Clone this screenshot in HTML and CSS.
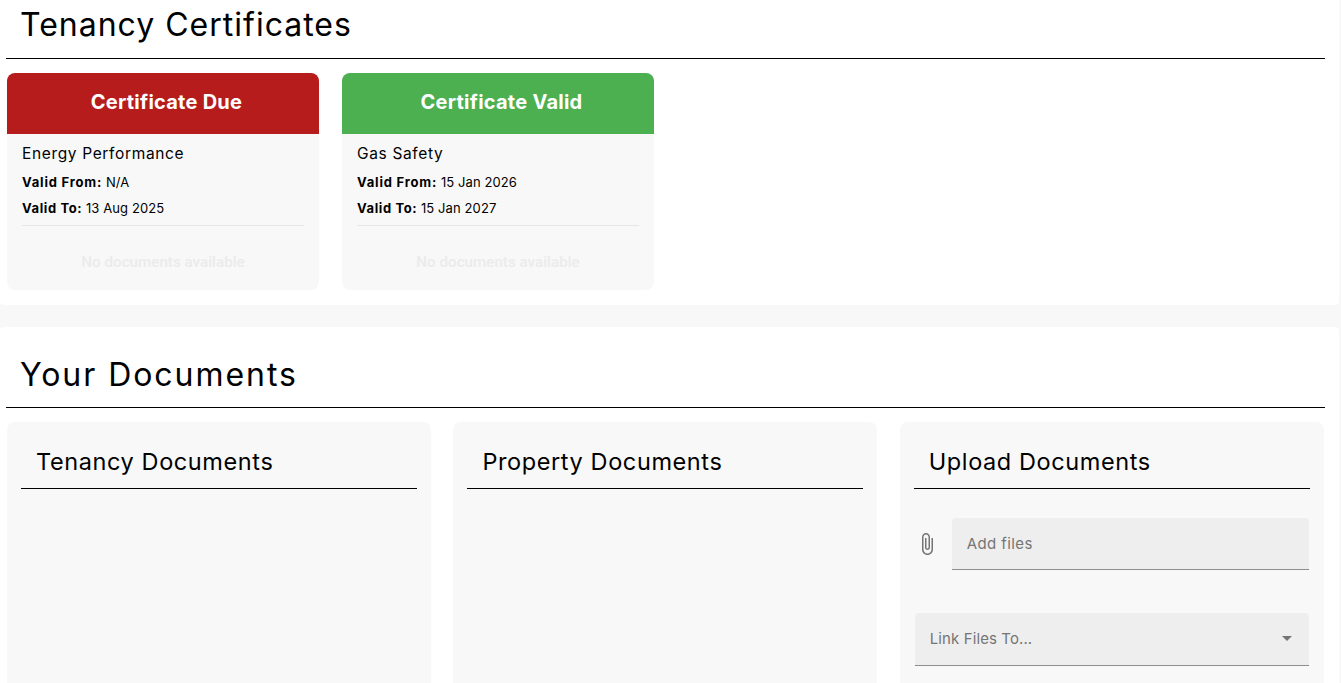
FILE: index.html
```html
<!DOCTYPE html>
<html lang="en">
<head>
<meta charset="utf-8">
<title>Documents</title>
<link rel="stylesheet" href="styles.css">
</head>
<body>
<div class="page">
  <section class="section first">
    <h1 class="section-title">Tenancy Certificates</h1>
    <div class="cert-row">
      <article class="cert">
        <div class="cert-head due">Certificate Due</div>
        <div class="cert-body">
          <div class="cert-name">Energy Performance</div>
          <div class="cert-line"><b>Valid From:</b> N/A</div>
          <div class="cert-line"><b class="to">Valid To:</b> 13 Aug 2025</div>
          <div class="cert-empty">No documents available</div>
        </div>
      </article>
      <article class="cert">
        <div class="cert-head valid">Certificate Valid</div>
        <div class="cert-body">
          <div class="cert-name">Gas Safety</div>
          <div class="cert-line"><b>Valid From:</b> 15 Jan 2026</div>
          <div class="cert-line"><b class="to">Valid To:</b> 15 Jan 2027</div>
          <div class="cert-empty">No documents available</div>
        </div>
      </article>
    </div>
  </section>
  <section class="section second">
    <h1 class="section-title">Your Documents</h1>
    <div class="doc-grid">
      <div class="panel"><h2 class="panel-title">Tenancy Documents</h2></div>
      <div class="panel"><h2 class="panel-title">Property Documents</h2></div>
      <div class="panel">
        <h2 class="panel-title">Upload Documents</h2>
        <div class="file-row">
          <svg class="clip" viewBox="0 0 24 24" width="24" height="24"><path fill="#757575" d="M16.5 6v11.5c0 2.21-1.79 4-4 4s-4-1.79-4-4V5c0-1.38 1.12-2.5 2.5-2.5s2.5 1.12 2.5 2.5v10.5c0 .55-.45 1-1 1s-1-.45-1-1V6H10v9.5c0 1.38 1.12 2.5 2.5 2.5s2.5-1.12 2.5-2.5V5c0-2.21-1.79-4-4-4S7 2.79 7 5v12.5c0 3.04 2.46 5.5 5.5 5.5s5.5-2.46 5.5-5.5V6h-1.5z"/></svg>
          <div class="field file-field">Add files</div>
        </div>
        <div class="field select-field">
          <span>Link Files To...</span>
          <span class="caret"></span>
        </div>
      </div>
    </div>
  </section>
</div>
</body>
</html>
```
FILE: styles.css
```css
* { box-sizing: border-box; }
html, body { margin: 0; height: 100%; }
body {
  background: #f8f8f8;
  font-family: Inter, "Noto Sans", sans-serif;
  color: #000;
  overflow: hidden;
}
.page {
  width: 1339px;
  height: 683px;
  overflow: hidden;
  display: flex;
  flex-direction: column;
  gap: 22px;
}
.section {
  background: #fff;
  padding: 0 14px 0 6px;
  border-radius: 4px;
}
.first { height: 305px; flex: none; border-radius: 0 0 4px 4px; }
.second { flex: 1; }
.section-title {
  margin: 0;
  height: 59px;
  padding-left: 14px;
  font-size: 32px;
  line-height: 50px;
  font-weight: 400;
  border-bottom: 1px solid #000;
  letter-spacing: 1px;
}
.second .section-title {
  height: 81px;
  line-height: 95px;
  letter-spacing: 1.95px;
}
.cert-row {
  display: flex;
  gap: 23px;
  margin: 14px 0 0 1px;
}
.cert {
  width: 312px;
  height: 217px;
  background: #f8f8f8;
  border-radius: 8px;
  overflow: hidden;
}
.cert-head {
  height: 61px;
  display: flex;
  align-items: center;
  justify-content: center;
  color: #fff;
  font-size: 20px;
  font-weight: 700;
  padding: 0 0 3px 7px;
  letter-spacing: 0.25px;
}
.due { background: #b71c1c; }
.valid { background: #4caf50; }
.cert-body { padding: 10px 15px 0; }
.cert-name {
  font-size: 15.5px;
  line-height: 20px;
  letter-spacing: 0.65px;
  margin-bottom: 5px;
}
.cert-line {
  font-size: 13px;
  line-height: 26px;
  letter-spacing: 0.1px;
}
.cert-line b {
  font-weight: 700;
  letter-spacing: 0.8px;
}
.cert-line b.to { letter-spacing: 0.6px; }
.cert-line + .cert-empty {
  border-top: 1px solid #e6e6e6;
  margin-top: 4px;
  padding-top: 26px;
}
.cert-empty {
  font-family: Roboto, sans-serif;
  font-size: 15.2px;
  font-weight: 500;
  line-height: 21px;
  color: #ebebeb;
  text-align: center;
}
.doc-grid {
  display: grid;
  grid-template-columns: 424px 424px 424px;
  column-gap: 22.4px;
  margin: 14px 0 0 1px;
}
.panel {
  background: #f8f8f8;
  border-radius: 8px;
  height: 300px;
  padding: 0 14px;
}
.panel-title {
  margin: 0;
  height: 67px;
  padding-left: 15px;
  font-size: 23.5px;
  font-weight: 400;
  line-height: 80px;
  border-bottom: 1px solid #000;
  letter-spacing: 0.6px;
}
.file-row {
  display: flex;
  align-items: center;
  gap: 13px;
  margin-top: 29px;
  margin-right: 1px;
}
.clip { flex: none; margin-left: 1px; }
.field {
  background: #eee;
  border-bottom: 1px solid #8e8e8e;
  border-radius: 4px 4px 0 0;
  color: #757575;
  font-size: 15px;
  letter-spacing: 0.1px;
}
.file-field {
  flex: 1;
  height: 52px;
  line-height: 51px;
  padding-left: 15px;
  letter-spacing: 0.4px;
}
.select-field {
  height: 53px;
  margin: 43px 1px 0 1px;
  padding: 0 17px 2px 15px;
  display: flex;
  align-items: center;
  justify-content: space-between;
}
.caret {
  width: 0;
  height: 0;
  border-left: 5px solid transparent;
  border-right: 5px solid transparent;
  border-top: 5px solid #757575;
}
```
